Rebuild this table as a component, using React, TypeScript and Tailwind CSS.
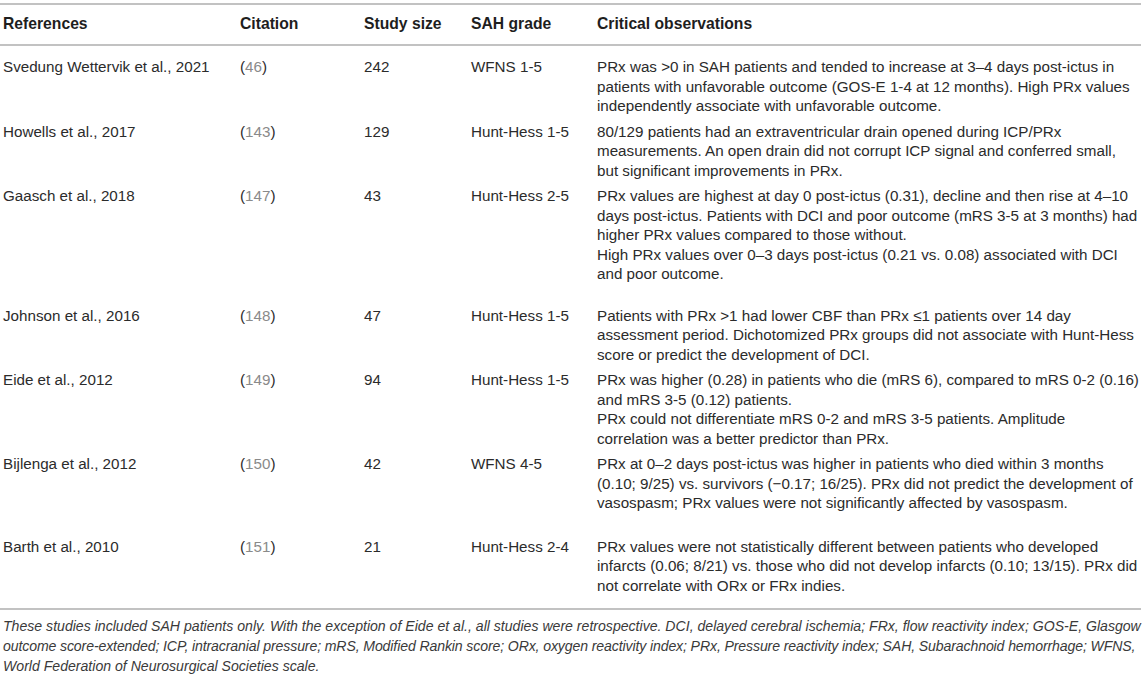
type Row = {
  ref: string;
  cite: string;
  size: string;
  grade: string;
  lines: string[];
  pb?: string;
};

// lines are kept as they break in the printed table
const rows: Row[] = [
  {
    ref: "Svedung Wettervik et al., 2021",
    cite: "46",
    size: "242",
    grade: "WFNS 1-5",
    lines: [
      "PRx was >0 in SAH patients and tended to increase at 3–4 days post-ictus in",
      "patients with unfavorable outcome (GOS-E 1-4 at 12 months). High PRx values",
      "independently associate with unfavorable outcome.",
    ],
  },
  {
    ref: "Howells et al., 2017",
    cite: "143",
    size: "129",
    grade: "Hunt-Hess 1-5",
    lines: [
      "80/129 patients had an extraventricular drain opened during ICP/PRx",
      "measurements. An open drain did not corrupt ICP signal and conferred small,",
      "but significant improvements in PRx.",
    ],
  },
  {
    ref: "Gaasch et al., 2018",
    cite: "147",
    size: "43",
    grade: "Hunt-Hess 2-5",
    lines: [
      "PRx values are highest at day 0 post-ictus (0.31), decline and then rise at 4–10",
      "days post-ictus. Patients with DCI and poor outcome (mRS 3-5 at 3 months) had",
      "higher PRx values compared to those without.",
      "High PRx values over 0–3 days post-ictus (0.21 vs. 0.08) associated with DCI",
      "and poor outcome.",
    ],
    pb: "pb-[19px]",
  },
  {
    ref: "Johnson et al., 2016",
    cite: "148",
    size: "47",
    grade: "Hunt-Hess 1-5",
    lines: [
      "Patients with PRx >1 had lower CBF than PRx ≤1 patients over 14 day",
      "assessment period. Dichotomized PRx groups did not associate with Hunt-Hess",
      "score or predict the development of DCI.",
    ],
  },
  {
    ref: "Eide et al., 2012",
    cite: "149",
    size: "94",
    grade: "Hunt-Hess 1-5",
    lines: [
      "PRx was higher (0.28) in patients who die (mRS 6), compared to mRS 0-2 (0.16)",
      "and mRS 3-5 (0.12) patients.",
      "PRx could not differentiate mRS 0-2 and mRS 3-5 patients. Amplitude",
      "correlation was a better predictor than PRx.",
    ],
  },
  {
    ref: "Bijlenga et al., 2012",
    cite: "150",
    size: "42",
    grade: "WFNS 4-5",
    lines: [
      "PRx at 0–2 days post-ictus was higher in patients who died within 3 months",
      "(0.10; 9/25) vs. survivors (−0.17; 16/25). PRx did not predict the development of",
      "vasospasm; PRx values were not significantly affected by vasospasm.",
    ],
    pb: "pb-[21px]",
  },
  {
    ref: "Barth et al., 2010",
    cite: "151",
    size: "21",
    grade: "Hunt-Hess 2-4",
    lines: [
      "PRx values were not statistically different between patients who developed",
      "infarcts (0.06; 8/21) vs. those who did not develop infarcts (0.10; 13/15). PRx did",
      "not correlate with ORx or FRx indies.",
    ],
    pb: "pb-[13px]",
  },
];

const footnote = [
  {
    text: "These studies included SAH patients only. With the exception of Eide et al., all studies were retrospective. DCI, delayed cerebral ischemia; FRx, flow reactivity index; GOS-E, Glasgow",
    cls: "tracking-[0px]",
  },
  {
    text: "outcome score-extended; ICP, intracranial pressure; mRS, Modified Rankin score; ORx, oxygen reactivity index; PRx, Pressure reactivity index; SAH, Subarachnoid hemorrhage; WFNS,",
    cls: "tracking-[-0.12px]",
  },
  {
    text: "World Federation of Neurosurgical Societies scale.",
    cls: "tracking-[0px]",
  },
];

const cols = "grid grid-cols-[237px_124px_107px_126px_1fr] pl-[3px]";

export default function App() {
  return (
    <div className="w-[1146px] h-[678px] overflow-hidden bg-white text-[#2b2b2b] font-['Liberation_Sans',Arial,sans-serif] text-[15.2px] leading-[19.5px] pt-[3px]">
      <div className="w-[1141px]">
        {/* header */}
        <div className={`${cols} border-y-2 border-[#c2c2c2] h-[43px] items-center pb-[2px] font-bold text-[15.7px] text-[#1e1e1e]`}>
          <div>References</div>
          <div>Citation</div>
          <div>Study size</div>
          <div>SAH grade</div>
          <div>Critical observations</div>
        </div>

        <div className="pt-[8px] border-b-2 border-[#c2c2c2]">
          {rows.map((r) => (
            <div key={r.ref} className={`${cols} pt-[3px] ${r.pb ?? "pb-[3px]"}`}>
              <div>{r.ref}</div>
              <div>
                (<span className="text-[#8a8a8a]">{r.cite}</span>)
              </div>
              <div>{r.size}</div>
              <div>{r.grade}</div>
              <div className="whitespace-nowrap">
                {r.lines.map((l, i) => (
                  <div key={i}>{l}</div>
                ))}
              </div>
            </div>
          ))}
        </div>
      </div>

      <div className="pl-[3px] pt-[7px] text-[14.1px] leading-[19.8px] italic text-[#3a3a3a] whitespace-nowrap">
        {footnote.map((l, i) => (
          <div key={i} className={l.cls}>
            {l.text}
          </div>
        ))}
      </div>
    </div>
  );
}
